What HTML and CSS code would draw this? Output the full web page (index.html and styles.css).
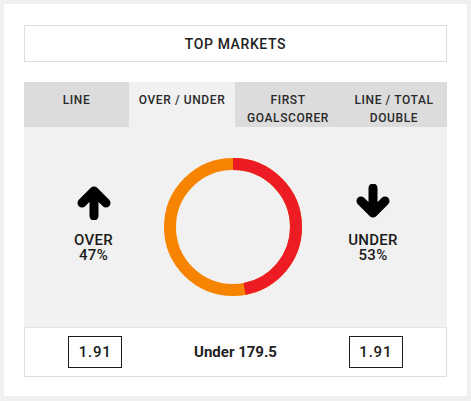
FILE: index.html
```html
<!DOCTYPE html>
<html>
<head>
<meta charset="utf-8">
<link rel="stylesheet" href="styles.css">
</head>
<body>
<div class="card">
  <div class="title">TOP MARKETS</div>
  <div class="tabs">
    <div class="tab">LINE</div>
    <div class="tab active">OVER / UNDER</div>
    <div class="tab">FIRST<br>GOALSCORER</div>
    <div class="tab">LINE / TOTAL<br>DOUBLE</div>
  </div>
  <div class="panel">
    <div class="side">
      <svg class="arrow" width="36" height="34" viewBox="0 0 36 34">
        <path d="M18 30 V6 M6 17 L18 5 L30 17" fill="none" stroke="#000" stroke-width="9" stroke-linecap="round" stroke-linejoin="round"/>
      </svg>
      <div class="label"><div>OVER</div><div>47%</div></div>
    </div>
    <div class="donut">
      <svg width="140" height="140" viewBox="0 0 140 140">
        <circle cx="70" cy="70" r="63" fill="none" stroke="#f68400" stroke-width="12"/>
        <circle cx="70" cy="70" r="63" fill="none" stroke="#ed1c24" stroke-width="12" stroke-dasharray="186 400" transform="rotate(-90 70 70)"/>
      </svg>
    </div>
    <div class="side">
      <svg class="arrow down" width="36" height="34" viewBox="0 0 36 34">
        <path d="M18 4 V28 M6 17 L18 29 L30 17" fill="none" stroke="#000" stroke-width="9" stroke-linecap="round" stroke-linejoin="round"/>
      </svg>
      <div class="label"><div>UNDER</div><div>53%</div></div>
    </div>
  </div>
  <div class="odds">
    <div class="cell"><span class="price">1.91</span></div>
    <div class="cell line">Under 179.5</div>
    <div class="cell"><span class="price">1.91</span></div>
  </div>
</div>
</body>
</html>
```

FILE: styles.css
```css
* { box-sizing: border-box; }
html, body { margin: 0; padding: 0; }
body {
  background: #f0f0f0;
  font-family: Roboto, "Liberation Sans", sans-serif;
  color: #1f1f1f;
  width: 471px;
  height: 401px;
  overflow: hidden;
}
.card {
  margin: 4px;
  width: 463px;
  height: 392px;
  background: #fff;
  padding: 21px 20px 19px;
}
.title {
  height: 37px;
  border: 1px solid #dedede;
  display: flex;
  align-items: center;
  justify-content: center;
  font-size: 14px;
  font-weight: 500;
  letter-spacing: 0.6px;
  color: #222;
}
.tabs {
  margin-top: 20px;
  display: grid;
  grid-template-columns: 105px 106px 106px 106px;
  height: 45px;
  background: #dcdcdc;
}
.tab {
  padding-top: 9px;
  text-align: center;
  font-size: 12px;
  line-height: 18px;
  font-weight: 500;
  letter-spacing: 0.6px;
  color: #2a2a2a;
}
.tab.active { background: #f1f1f1; }
.panel {
  height: 200px;
  background: #f1f1f1;
  display: grid;
  grid-template-columns: 139px 140px 140px;
  align-items: center;
}
.side {
  display: flex;
  flex-direction: column;
  align-items: center;
  padding-bottom: 6px;
}
.arrow { display: block; }
.arrow.down { margin-top: -2px; margin-bottom: 2px; }
.label {
  margin-top: 12px;
  text-align: center;
  font-size: 15px;
  line-height: 16px;
  font-weight: 500;
  letter-spacing: 0.3px;
  color: #1a1a1a;
}
.label div { height: 15px; }
.donut {
  display: flex;
  justify-content: center;
  align-items: center;
}
.donut svg { display: block; }
.odds {
  height: 50px;
  border: 1px solid #dedede;
  border-top-color: #e4e4e4;
  display: grid;
  grid-template-columns: 1fr 1fr 1fr;
  align-items: center;
}
.cell {
  display: flex;
  justify-content: center;
  align-items: center;
}
.price {
  width: 54px;
  height: 32px;
  border: 1px solid #1a1a1a;
  display: flex;
  align-items: center;
  justify-content: center;
  font-size: 15px;
  font-weight: 500;
  letter-spacing: 0.8px;
  color: #1a1a1a;
}
.line {
  font-size: 15px;
  font-weight: 700;
  color: #222;
}
```
